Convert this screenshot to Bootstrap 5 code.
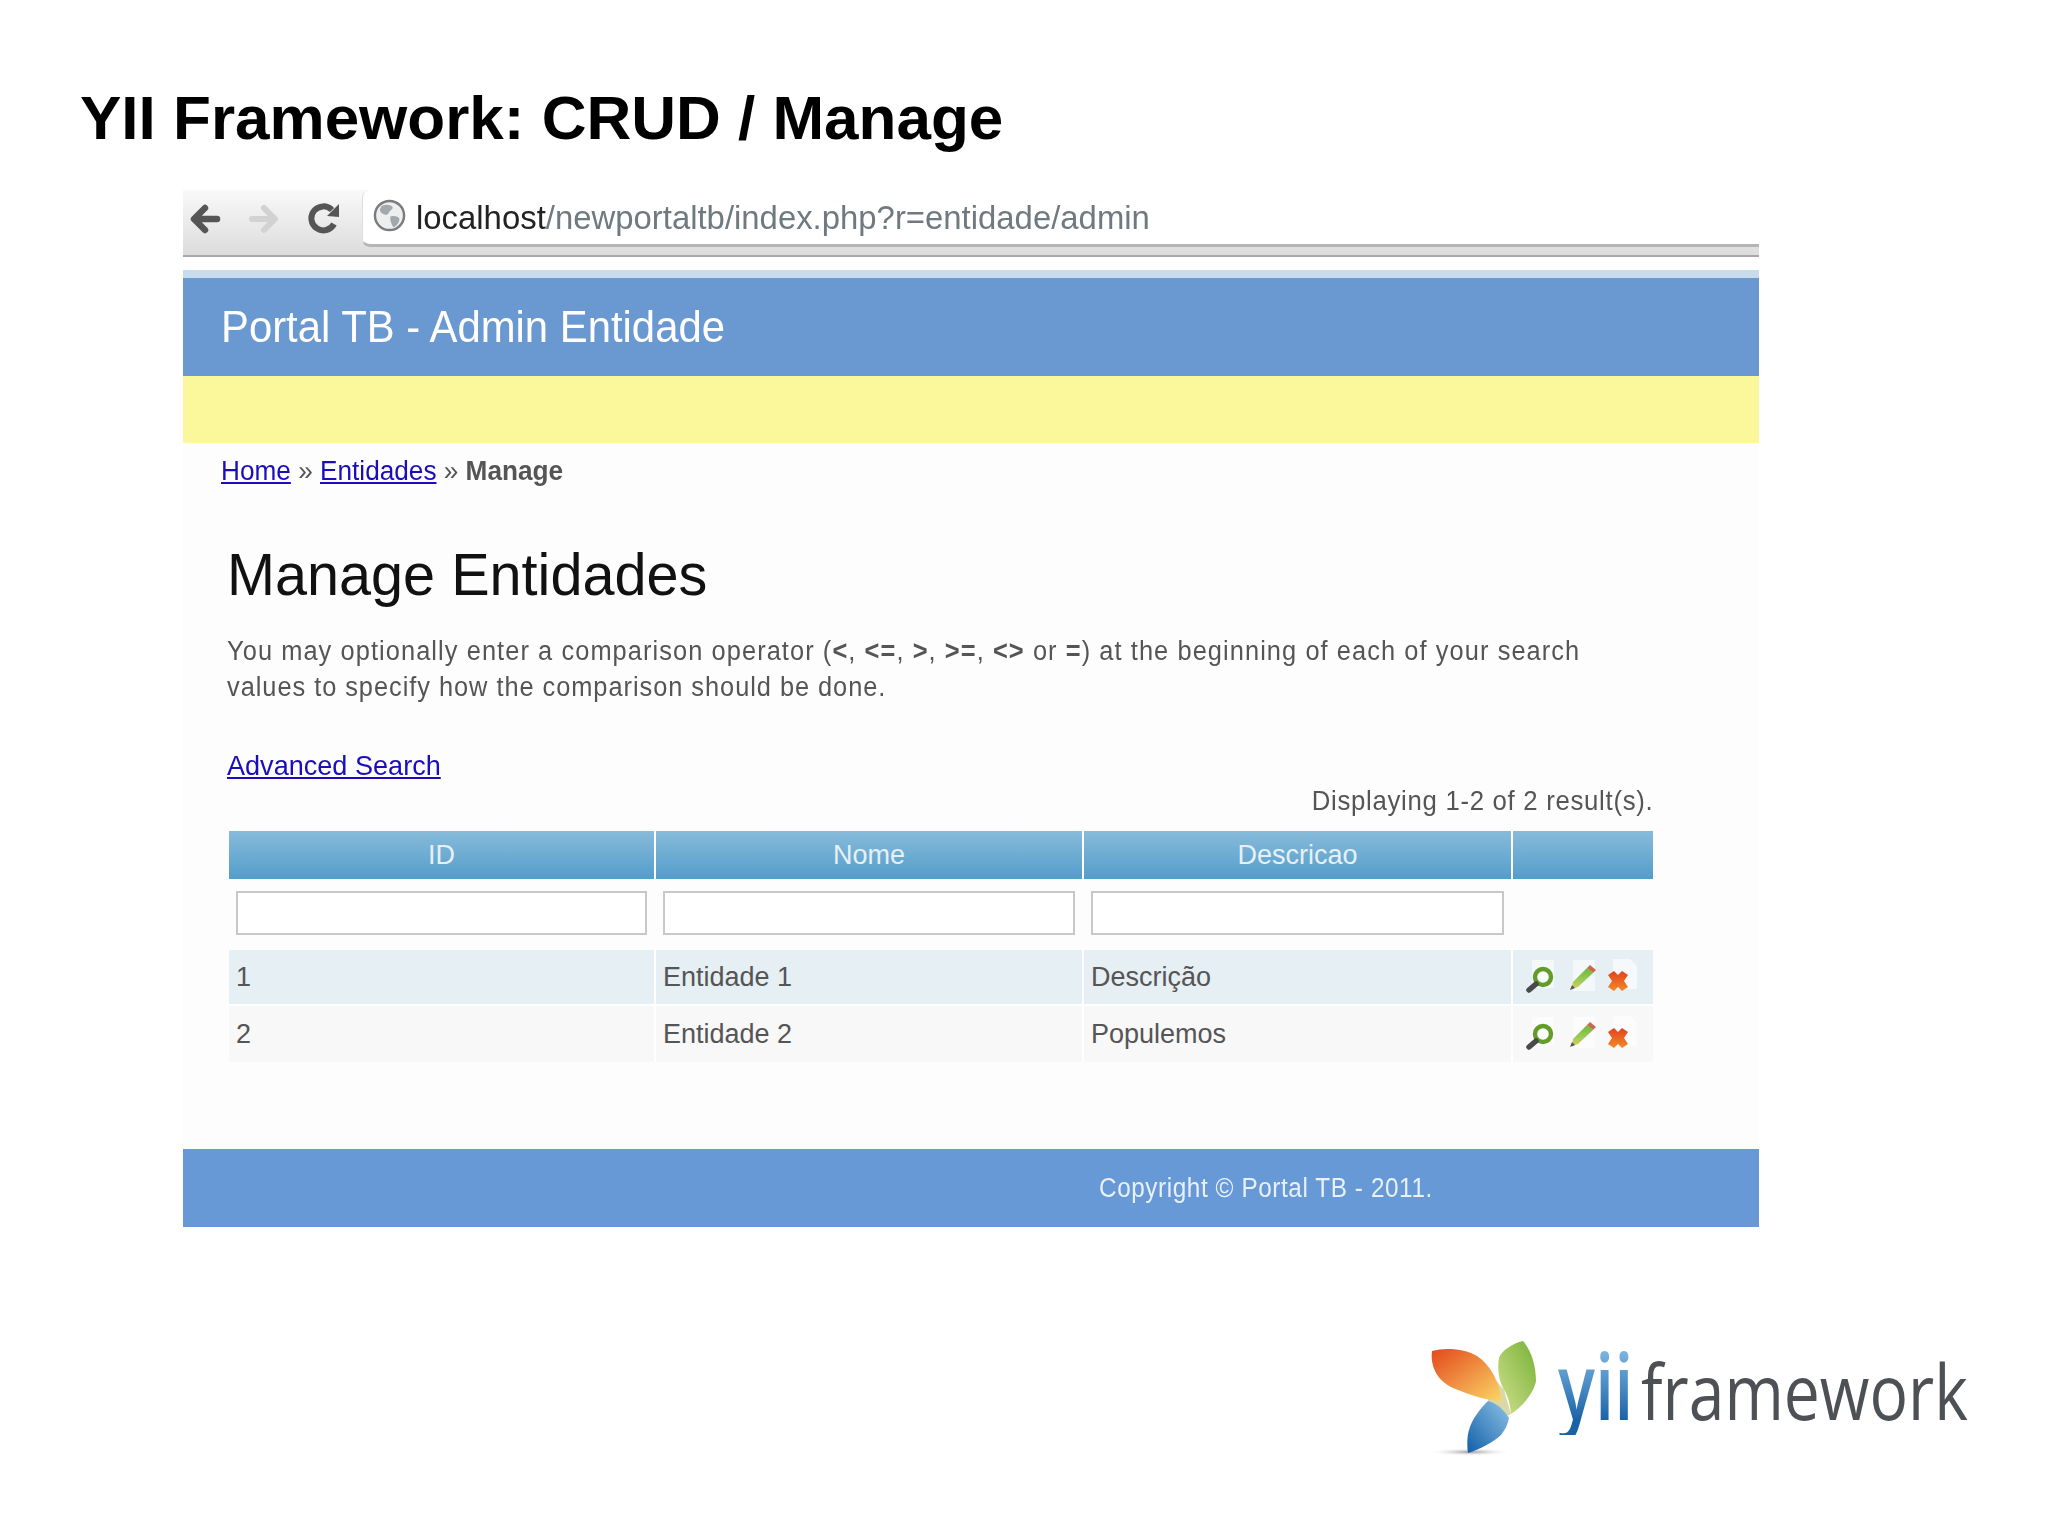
<!DOCTYPE html>
<html lang="pt">
<head>
<meta charset="utf-8">
<title>YII Framework: CRUD / Manage</title>
<link href="https://cdn.jsdelivr.net/npm/bootstrap@5.3.0/dist/css/bootstrap.min.css" rel="stylesheet">
<style>
html,body{background:#fff;font-family:"Liberation Sans",Arial,sans-serif;}
.slide{width:2048px;height:1535px;overflow:hidden;padding-top:80px;}
.slide-title{font:700 62px/76px "Liberation Sans",Arial,sans-serif;color:#000;margin:0 0 34px 80px;}
.shot{margin-left:183px;width:1576px;background:#fdfdfd;}
.chrome{height:67px;background:linear-gradient(#f9f9f9,#dcdcdc);border-bottom:2px solid #a8a8a8;padding-left:6px;}
.chrome-btn{width:32px;height:32px;margin-top:13px;flex:none;}
.chrome-fwd{margin-left:27px;}
.chrome-rel{margin-left:28px;}
.omnibox{margin-left:22px;height:57px;background:#fff;border-left:1px solid #ddd;border-bottom:3px solid #b5b5b5;border-top-left-radius:8px;border-bottom-left-radius:8px;font-size:34px;color:#6f7a80;line-height:55px;padding-left:10px;white-space:nowrap;}
.omni-globe{margin-top:9px;margin-right:10px;flex:none;}
.omni-host{color:#222;}
.squeeze{display:inline-block;transform-origin:left center;white-space:nowrap;}
.sq-url{transform:scaleX(.967);}
.sq-head{transform:scaleX(.951);}
.sq-crumb{transform:scaleX(.97);}
.sq-title{transform:scaleX(.96);}
.sq-intro{transform:scaleX(.94);letter-spacing:1.15px;}
.intro-tail{letter-spacing:1.02px;}
.sq-search{transform:scaleX(.967);}
.sq-summary{transform:scaleX(.92);transform-origin:right center;letter-spacing:.76px;}
.sq-foot{transform:scaleX(.9);letter-spacing:.65px;}
.gap-band{height:13px;background:#fff;}
.light-band{height:8px;background:#c9dcee;}
.site-head{height:98px;background:#6a98d0;color:#fff;font-size:44px;line-height:98px;padding-left:38px;}
.site-menu{height:67px;background:#fbf79b;}
.crumbs{padding:10px 0 0 38px;height:94px;font-size:27px;line-height:36px;color:#555;}
.crumbs a,.search-link{color:#1a0dbb;text-decoration:underline;}
.content-area{padding-left:44px;padding-right:106px;color:#555;}
.page-head{font:400 60px/76px "Liberation Sans",Arial,sans-serif;color:#111;margin:0 0 21px;}
.intro{font-size:27px;line-height:35.5px;margin:0 0 43px;}
.search-row{font-size:28px;line-height:36px;height:37px;}
.summary{font-size:28px;line-height:32px;text-align:right;margin-bottom:10px;height:36px;}
.grid-tbl{width:1424px;margin:0 0 0 2px;table-layout:fixed;border-collapse:separate;border-spacing:0;font-size:27px;}
.grid-tbl th,.grid-tbl td{padding:0 7px;border:0;border-right:2px solid #fff;vertical-align:middle;box-shadow:none;}
.grid-tbl th:last-child,.grid-tbl td:last-child{border-right:0;}
.grid-tbl thead th{height:48px;background:linear-gradient(#88bbda,#539dcb);color:#e6f0f6;font-weight:400;text-align:center;}
.grid-tbl .filter-row td{height:71px;background:#fdfdfd;border-right-color:#fdfdfd;}
.filter-box{display:block;width:100%;height:44px;margin-bottom:3px;border:2px solid #c8c8c8;background:#fff;}
.grid-tbl .row-a td{height:56px;background:#e5eff4;color:#555;border-bottom:2px solid #fff;}
.grid-tbl .row-b td{height:56px;background:#f8f8f9;color:#555;}
.col-wide-a{width:427px;}
.col-wide-b{width:428px;}
.col-wide-c{width:429px;}
.col-act{width:140px;}
.act-icons{width:120px;height:36px;display:block;}
.site-foot{margin-top:87px;height:78px;background:#6699d6;color:#e9f0f9;font-size:27px;line-height:78px;padding-left:916px;}
.logo-wrap{margin-top:94px;padding-right:48px;}
.logo-box{width:600px;height:150px;}
.logo-words{padding-top:14px;}
.logo-yii{font:600 92px/100px "Open Sans",sans-serif;margin-right:-18px;transform:scaleX(.75);background:linear-gradient(#7db6e0 15%,#1a62a8 85%);-webkit-background-clip:text;background-clip:text;color:transparent;}
.logo-fw{font:400 77px/100px "Open Sans",sans-serif;color:#4d5054;transform:scaleX(.833);}
</style>
</head>
<body>
<div class="slide">
  <h1 class="slide-title">YII Framework: CRUD / Manage</h1>
  <div class="shot">
    <div class="chrome d-flex">
      <svg class="chrome-btn" viewBox="0 0 32 32"><path d="M6 16h22M16 5 5 16l11 11" fill="none" stroke="#555" stroke-width="6.5" stroke-linecap="round" stroke-linejoin="round"/></svg>
      <svg class="chrome-btn chrome-fwd" viewBox="0 0 32 32"><path d="M26 16H4M16 5l11 11-11 11" fill="none" stroke="#d2d2d2" stroke-width="6" stroke-linecap="round" stroke-linejoin="round"/></svg>
      <svg class="chrome-btn chrome-rel" viewBox="0 0 32 32"><path d="M26 21A12 12 0 1 1 24 7" fill="none" stroke="#555" stroke-width="6"/><path d="M19 13 31 14V1z" fill="#555"/></svg>
      <div class="omnibox flex-grow-1 d-flex align-items-start">
        <svg class="omni-globe" width="33" height="33" viewBox="0 0 34 34"><circle cx="17" cy="17" r="15" fill="#eceef0" stroke="#7c7c7c" stroke-width="2.5"/><path d="M9 7c5-2 9-1 11 1 1 3-2 3-3 5s-2 4-5 3-5-3-5-5zM18 18c4-1 8 0 9 2s-2 8-6 9c-2-3-4-8-3-11z" fill="#a3a8ad"/></svg>
        <span class="squeeze sq-url"><span class="omni-host">localhost</span>/newportaltb/index.php?r=entidade/admin</span>
      </div>
    </div>
    <div class="gap-band"></div>
    <div class="light-band"></div>
    <div class="site-head"><span class="squeeze sq-head">Portal TB - Admin Entidade</span></div>
    <div class="site-menu"></div>
    <div class="crumbs"><span class="squeeze sq-crumb"><a href="#">Home</a> » <a href="#">Entidades</a> » <strong>Manage</strong></span></div>
    <div class="content-area">
      <h2 class="page-head"><span class="squeeze sq-title">Manage Entidades</span></h2>
      <p class="intro"><span class="squeeze sq-intro">You may optionally enter a comparison operator (<b>&lt;</b>, <b>&lt;=</b>, <b>&gt;</b>, <b>&gt;=</b>, <b>&lt;&gt;</b> or <b>=</b>) at the beginning of each of your search<br><span class="intro-tail">values to specify how the comparison should be done.</span></span></p>
      <div class="search-row"><a class="search-link squeeze sq-search" href="#">Advanced Search</a></div>
      <div class="summary"><span class="squeeze sq-summary">Displaying 1-2 of 2 result(s).</span></div>
      <table class="table grid-tbl mb-0">
        <colgroup><col class="col-wide-a"><col class="col-wide-b"><col class="col-wide-c"><col class="col-act"></colgroup>
        <thead><tr><th>ID</th><th>Nome</th><th>Descricao</th><th></th></tr></thead>
        <tbody>
          <tr class="filter-row"><td><span class="filter-box"></span></td><td><span class="filter-box"></span></td><td><span class="filter-box"></span></td><td></td></tr>
          <tr class="row-a"><td>1</td><td>Entidade 1</td><td>Descrição</td><td>
            <svg class="act-icons" viewBox="0 0 120 36"><use href="#actions"/></svg></td></tr>
          <tr class="row-b"><td>2</td><td>Entidade 2</td><td>Populemos</td><td>
            <svg class="act-icons" viewBox="0 0 120 36"><use href="#actions"/></svg></td></tr>
        </tbody>
      </table>
    </div>
    <div class="site-foot"><span class="squeeze sq-foot">Copyright © Portal TB - 2011.</span></div>
  </div>
  <div class="logo-wrap d-flex justify-content-end">
    <div class="logo-box d-flex">
      <svg width="158" height="150" viewBox="0 0 158 150" class="flex-shrink-0">
        <defs>
          <linearGradient id="po" x1="0" y1="0" x2="1" y2="1"><stop offset="0" stop-color="#e4481c"/><stop offset="1" stop-color="#fbd667"/></linearGradient>
          <linearGradient id="pg" x1="1" y1="0" x2="0" y2="1"><stop offset="0" stop-color="#76b236"/><stop offset="1" stop-color="#d3e08e"/></linearGradient>
          <linearGradient id="pb" x1="1" y1="0" x2="0" y2="1"><stop offset="0" stop-color="#8fc2e6"/><stop offset="1" stop-color="#115fa8"/></linearGradient>
          <radialGradient id="sh"><stop offset="0" stop-color="#999"/><stop offset="1" stop-color="#fff" stop-opacity="0"/></radialGradient>
        </defs>
        <ellipse cx="70" cy="131" rx="42" ry="4" fill="url(#sh)"/>
        <path d="M90 52 104 69 111 93 102 97 88 82z" fill="#d8d9a6"/>
        <path d="M123 20c8 9 13 24 13 40-2 12-14 26-25 33-1-10-3-18-7-24-5-9-7-20-5-32 2-7 14-15 24-17z" fill="url(#pg)"/>
        <path d="M32 30c14-4 34-2 45 5 14 9 22 26 25 45-14 0-32-6-49-13-8-4-15-10-18-17-3-6-4-14-3-20z" fill="url(#po)"/>
        <path d="M88 80c9 2 16 9 21 17-1 6-4 12-8 17-9 8-21 14-33 18-1-8-1-17 1-23 3-11 11-21 19-29z" fill="url(#pb)"/>
      </svg>
      <div class="logo-words d-flex align-items-baseline">
        <span class="squeeze logo-yii">yii</span>
        <span class="squeeze logo-fw">framework</span>
      </div>
    </div>
  </div>
</div>
<svg width="0" height="0" class="position-absolute">
  <defs>
    <linearGradient id="xg" x1="0" y1="0" x2="0" y2="1"><stop offset="0" stop-color="#e0421c"/><stop offset="1" stop-color="#f28a2a"/></linearGradient>
    <linearGradient id="pn" x1="0" y1="0" x2="0" y2="1"><stop offset="0" stop-color="#6cb83a"/><stop offset=".7" stop-color="#a5cf5a"/><stop offset="1" stop-color="#efc94a"/></linearGradient>
    <g id="actions">
      <path d="M12 1h22v28H12z" fill="#fff" opacity=".55"/>
      <circle cx="23" cy="18" r="8" fill="#fff" fill-opacity=".5" stroke="#649c2a" stroke-width="4.4"/>
      <path d="M16 25l-7 6" stroke="#4a4a4a" stroke-width="5.5" stroke-linecap="round"/>
      <path d="M53 1h22v31H53z" fill="#fff" opacity=".55"/>
      <path d="M67 9l6 5-15 14-6 2 1-7z" fill="url(#pn)"/>
      <path d="M67 9l3-3 6 5-3 3z" fill="#c9684a"/>
      <path d="M50 31l2-5 3 3z" fill="#555"/>
      <path d="M93 0h17l7 7v23H93z" fill="#fff" opacity=".6"/>
      <path d="M88 16l6-4 4 4 4-4 6 4-4 6 4 6-6 4-4-4-4 4-6-4 4-6z" fill="url(#xg)"/>
    </g>
  </defs>
</svg>
</body>
</html>
